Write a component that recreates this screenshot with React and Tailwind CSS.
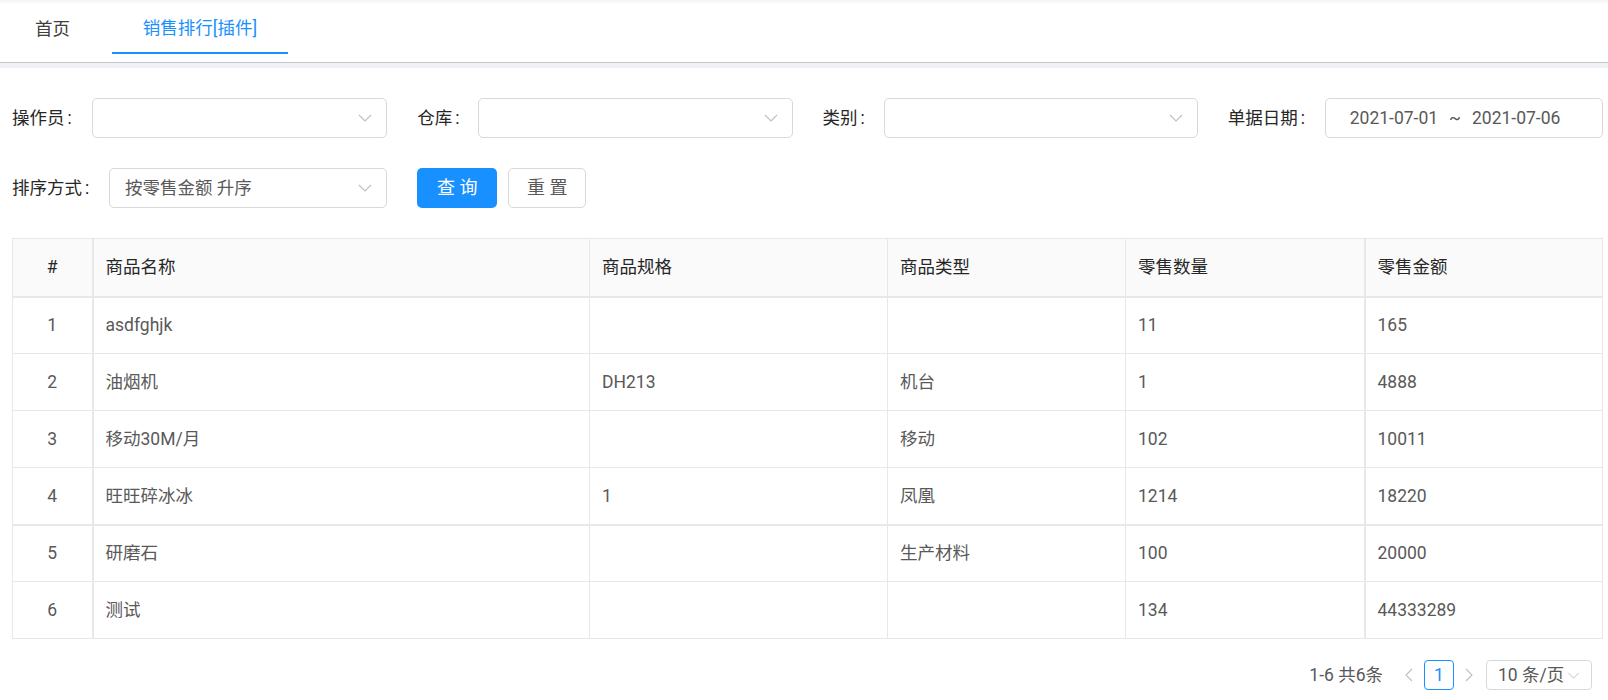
import React from 'react';

const rows = [
  { id: 1, name: 'asdfghjk', spec: '', type: '', qty: '11', amount: '165' },
  { id: 2, name: '油烟机', spec: 'DH213', type: '机台', qty: '1', amount: '4888' },
  { id: 3, name: '移动30M/月', spec: '', type: '移动', qty: '102', amount: '10011' },
  { id: 4, name: '旺旺碎冰冰', spec: '1', type: '凤凰', qty: '1214', amount: '18220' },
  { id: 5, name: '研磨石', spec: '', type: '生产材料', qty: '100', amount: '20000' },
  { id: 6, name: '测试', spec: '', type: '', qty: '134', amount: '44333289' },
];

function ChevronDown({ className }) {
  return (
    <svg viewBox="0 0 14 8" className={className} fill="none" stroke="currentColor" strokeWidth="1.1">
      <path d="M1 1l6 6 6-6" />
    </svg>
  );
}

function ChevronSide({ dir }) {
  return (
    <svg viewBox="0 0 8 14" className="h-[14px] w-[8px] text-[#bfbfbf]" fill="none" stroke="currentColor" strokeWidth="1.1">
      <path d={dir === 'left' ? 'M7 1L1 7l6 6' : 'M1 1l6 6-6 6'} />
    </svg>
  );
}

function Select({ value }) {
  return (
    <div className="flex h-[40px] min-w-0 flex-1 items-center rounded-[5px] border border-[#d9d9d9] bg-white pl-[15px] pr-[14px]">
      <span className="flex-1 text-[#595959]">{value}</span>
      <ChevronDown className="h-[8px] w-[14px] text-[#bfbfbf]" />
    </div>
  );
}

function Field({ label, width, children }) {
  return (
    <div className="flex items-center">
      <label className="shrink-0 text-[#262626]" style={{ width }}>
        {label}
        <span className="ml-[3px]">:</span>
      </label>
      {children}
    </div>
  );
}

export default function App() {
  return (
    <div className="min-h-[700px] bg-white text-[17.5px] leading-[24px]" style={{ fontFamily: 'Roboto, "Noto Sans CJK SC", sans-serif' }}>
      <div className="h-[63px] border-b border-[#c8c8c8] bg-white">
        <div className="h-[4px] bg-gradient-to-b from-[#f3f3f3] to-white" />
        <div className="flex h-[50px] items-stretch">
          <div className="flex w-[112px] items-center pl-[35px] text-[#404040]">首页</div>
          <div className="flex w-[176px] items-center justify-center border-b-2 border-[#1890ff] text-[#1890ff]">
            销售排行[插件]
          </div>
        </div>
      </div>
      <div className="h-[5px] bg-[#f0f1f5]" />

      <div className="pl-3 pr-[5px] pt-[30px]">
        <div className="grid grid-cols-4 gap-x-[30px] gap-y-[30px]">
          <Field label="操作员" width="80px">
            <Select value="" />
          </Field>
          <Field label="仓库" width="61px">
            <Select value="" />
          </Field>
          <Field label="类别" width="61px">
            <Select value="" />
          </Field>
          <Field label="单据日期" width="97px">
            <div className="flex h-[40px] min-w-0 flex-1 items-center gap-[11px] rounded-[5px] border border-[#d9d9d9] bg-white pl-[24px] text-[#595959]">
              <span>2021-07-01</span>
              <span>~</span>
              <span>2021-07-06</span>
            </div>
          </Field>
          <Field label="排序方式" width="97px">
            <Select value="按零售金额 升序" />
          </Field>
          <div className="flex items-center gap-[11px]">
            <button className="h-[40px] w-[80px] rounded-[5px] bg-[#1890ff] text-[18px] text-white">查 询</button>
            <button className="h-[40px] w-[78px] rounded-[5px] border border-[#d9d9d9] bg-white text-[18px] text-[#595959]">重 置</button>
          </div>
        </div>

        <table className="mt-[30px] w-full table-fixed border-collapse border border-[#e8e8e8]">
          <colgroup>
            <col className="w-[80px]" />
            <col className="w-[497px]" />
            <col className="w-[298px]" />
            <col className="w-[238px]" />
            <col className="w-[239px]" />
            <col />
          </colgroup>
          <thead>
            <tr className="h-[58px] border-b-2 border-[#e8e8e8] bg-[#fafafa] text-[#262626]">
              <th className="border-r-2 border-[#e8e8e8] text-center font-normal">#</th>
              <th className="border-r border-[#e8e8e8] px-3 text-left font-normal">商品名称</th>
              <th className="border-r border-[#e8e8e8] px-3 text-left font-normal">商品规格</th>
              <th className="border-r border-[#e8e8e8] px-3 text-left font-normal">商品类型</th>
              <th className="border-r-2 border-[#e8e8e8] px-3 text-left font-normal">零售数量</th>
              <th className="px-3 text-left font-normal">零售金额</th>
            </tr>
          </thead>
          <tbody>
            {rows.map((r) => (
              <tr key={r.id} className={(r.id === 4 ? 'border-b-2' : 'border-b') + ' h-[57px] border-[#e8e8e8] text-[#595959]'}>
                <td className="border-r-2 border-[#e8e8e8] text-center">{r.id}</td>
                <td className="border-r border-[#e8e8e8] px-3">{r.name}</td>
                <td className="border-r border-[#e8e8e8] px-3">{r.spec}</td>
                <td className="border-r border-[#e8e8e8] px-3">{r.type}</td>
                <td className="border-r-2 border-[#e8e8e8] px-3">{r.qty}</td>
                <td className="px-3">{r.amount}</td>
              </tr>
            ))}
          </tbody>
        </table>

        <div className="mt-[21px] flex items-center justify-end pr-[11px] text-[#595959]">
          <span className="mr-[11px]">1-6 共6条</span>
          <span className="flex h-[30px] w-[30px] items-center justify-center">
            <ChevronSide dir="left" />
          </span>
          <span className="flex h-[30px] w-[30px] items-center justify-center rounded-[4px] border border-[#1890ff] text-[#1890ff]">1</span>
          <span className="flex h-[30px] w-[30px] items-center justify-center">
            <ChevronSide dir="right" />
          </span>
          <div className="ml-[2px] flex h-[30px] w-[106px] items-center rounded-[4px] border border-[#d9d9d9] pl-[11px] pr-[11px]">
            <span className="flex-1">10 条/页</span>
            <ChevronDown className="h-[7px] w-[13px] text-[#bfbfbf]" />
          </div>
        </div>
      </div>
    </div>
  );
}
